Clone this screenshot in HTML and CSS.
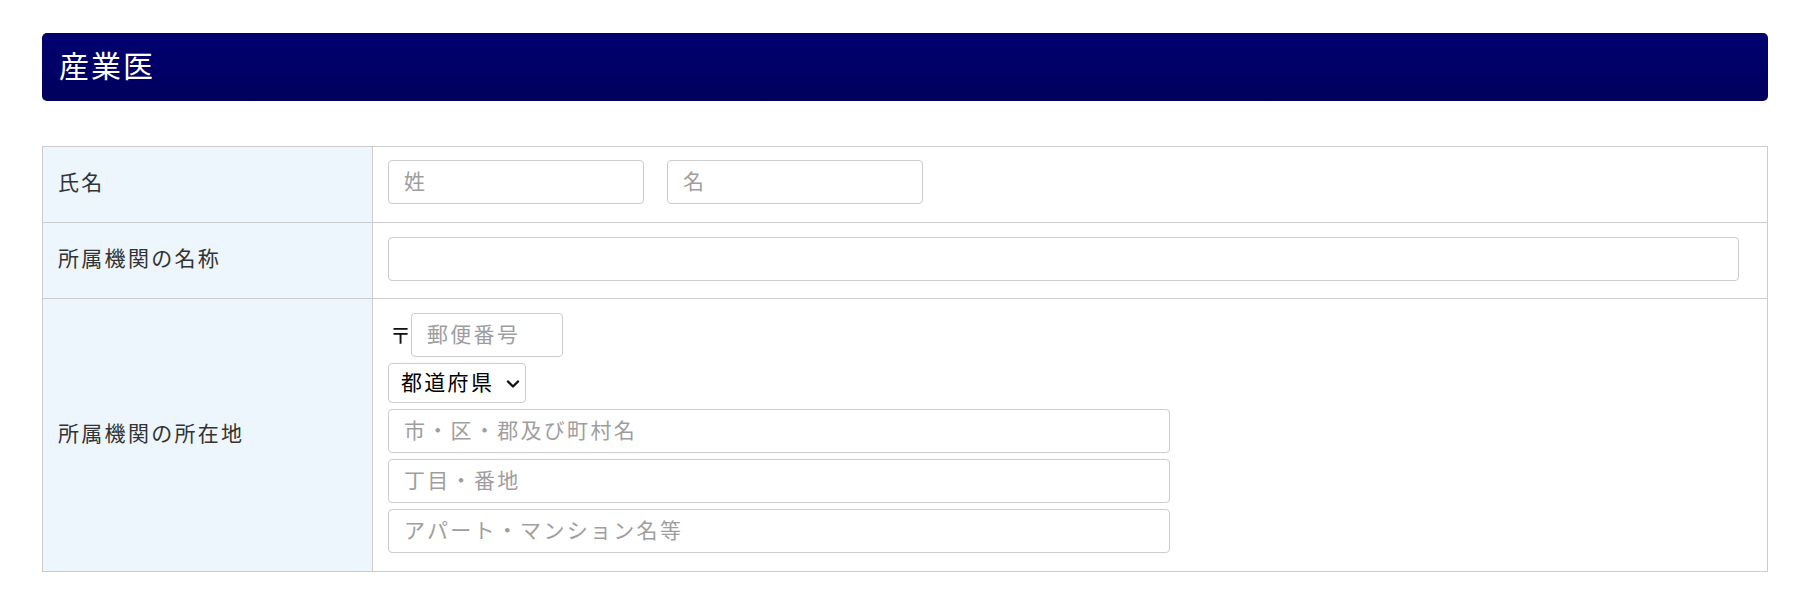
FILE: index.html
```html
<!DOCTYPE html>
<html lang="ja">
<head>
<meta charset="utf-8">
<title>産業医</title>
<link rel="stylesheet" href="styles.css">
</head>
<body>
<div class="page">
  <h2 class="section-title">産業医</h2>
  <table class="form-table">
    <tr class="row-name">
      <th>氏名</th>
      <td>
        <div class="name-fields">
          <input class="field field-half" type="text" placeholder="姓">
          <input class="field field-half" type="text" placeholder="名">
        </div>
      </td>
    </tr>
    <tr class="row-org">
      <th>所属機関の名称</th>
      <td>
        <input class="field field-full" type="text">
      </td>
    </tr>
    <tr class="row-addr">
      <th>所属機関の所在地</th>
      <td>
        <div class="addr-fields">
          <div class="zip-line"><span class="zip-mark">〒</span><input class="field field-zip" type="text" placeholder="郵便番号"></div>
          <div class="select-wrap">
            <select class="pref-select"><option>都道府県</option></select>
            <svg class="chevron" width="14" height="10" viewBox="0 0 14 10"><path d="M2 2.5 L7 7.5 L12 2.5" fill="none" stroke="#111" stroke-width="2.4" stroke-linecap="round" stroke-linejoin="round"/></svg>
          </div>
          <input class="field field-addr" type="text" placeholder="市・区・郡及び町村名">
          <input class="field field-addr" type="text" placeholder="丁目・番地">
          <input class="field field-addr" type="text" placeholder="アパート・マンション名等">
        </div>
      </td>
    </tr>
  </table>
</div>
</body>
</html>
```

FILE: styles.css
```css
html, body {
  margin: 0;
  padding: 0;
  background: #fff;
}
body {
  font-family: "Noto Sans CJK JP", "Noto Sans", sans-serif;
  color: #333;
}
.page {
  padding: 33px 42px 0 42px;
}
.section-title {
  margin: 0;
  height: 68px;
  box-sizing: border-box;
  padding: 0 0 7px 17px;
  display: flex;
  align-items: center;
  background: linear-gradient(to bottom, #000072, #00005c);
  border-radius: 5px;
  color: #fff;
  font-weight: normal;
  font-size: 30px;
  letter-spacing: 2px;
}
.form-table {
  margin-top: 45px;
  width: 100%;
  border-collapse: collapse;
  border: 1px solid #ccc;
}
.form-table th,
.form-table td {
  border: 1px solid #ccc;
}
.form-table th {
  width: 314px;
  background: #edf5fd;
  text-align: left;
  font-weight: normal;
  font-size: 21px;
  letter-spacing: 2.3px;
  color: #333;
  padding: 0 0 7px 15px;
  vertical-align: middle;
}
.form-table td {
  padding: 13px 28px 18px 15px;
  vertical-align: top;
}
.row-org td {
  padding-top: 14px;
  padding-bottom: 17px;
}
.row-addr td {
  padding-top: 14px;
  padding-bottom: 18px;
}
.field {
  display: block;
  box-sizing: border-box;
  height: 44px;
  border: 1px solid #ccc;
  border-radius: 4px;
  padding: 0 15px 4px 15px;
  font-family: "Noto Sans CJK JP", "Noto Sans", sans-serif;
  font-size: 21px;
  letter-spacing: 2.3px;
  color: #333;
  background: #fff;
  outline: none;
}
.field::placeholder {
  color: #9e9e9e;
}
.name-fields {
  display: flex;
  gap: 23px;
}
.field-half {
  width: 256px;
}
.field-full {
  width: 100%;
}
.addr-fields {
  display: flex;
  flex-direction: column;
  align-items: flex-start;
  gap: 6px;
}
.zip-line {
  display: flex;
  align-items: center;
  padding-left: 2px;
}
.zip-mark {
  font-size: 21px;
  color: #111;
  width: 21px;
  padding-bottom: 3px;
}
.field-zip {
  width: 152px;
}
.select-wrap {
  position: relative;
}
.pref-select {
  appearance: none;
  -webkit-appearance: none;
  display: block;
  box-sizing: border-box;
  width: 138px;
  height: 40px;
  border: 1px solid #ccc;
  border-radius: 4px;
  background: #fff;
  padding: 0 0 4px 12px;
  font-family: "Noto Sans CJK JP", "Noto Sans", sans-serif;
  font-size: 21px;
  letter-spacing: 2.3px;
  color: #000;
}
.chevron {
  position: absolute;
  right: 6px;
  top: 16px;
  pointer-events: none;
}
.field-addr {
  width: 782px;
}
```
